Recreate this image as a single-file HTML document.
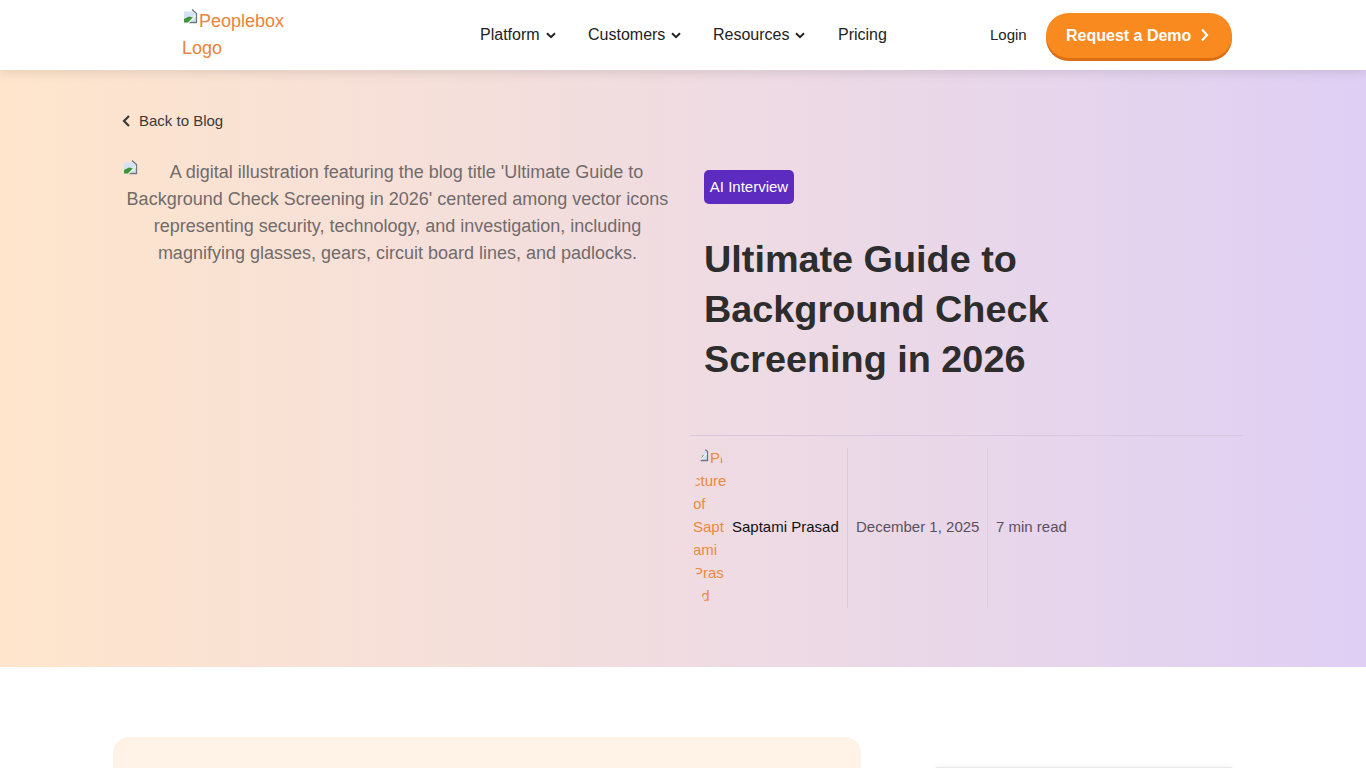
<!DOCTYPE html>
<html>
<head>
<meta charset="utf-8">
<style>
*{box-sizing:border-box;margin:0;padding:0}
html,body{width:1366px;height:768px;overflow:hidden;background:#fff;font-family:"Liberation Sans",sans-serif;}
.hdr{position:absolute;left:0;top:0;width:1366px;height:70px;background:#fff;z-index:5;box-shadow:0 3px 10px rgba(0,0,0,0.1);}
.logo{position:absolute;left:182px;top:8px;width:120px;font-size:18px;line-height:27px;color:#e9843a;}
.logo .bi{display:inline-block;width:16px;height:16px;vertical-align:top;margin-top:0px;margin-right:1px}
.nav{position:absolute;top:25px;font-size:16px;color:#222;line-height:20px;}
.chev{display:inline-block;vertical-align:1px;margin-left:6px}
.login{position:absolute;left:990px;top:26px;font-size:15px;color:#222;}
.btn{position:absolute;left:1046px;top:13px;width:186px;height:45px;border-radius:23px;background:#f98a1f;box-shadow:0 3px 0 #dc6f14;color:#fff;font-weight:bold;font-size:16px;line-height:46px;padding-left:20px;}
.hero{position:absolute;left:0;top:70px;width:1366px;height:597px;background:linear-gradient(90deg,#ffe5cc 0%,#f3dedd 40%,#e9d7e9 70%,#dfcff4 100%);}
.back{position:absolute;left:122px;top:112px;font-size:15px;color:#3d3936;line-height:18px;}
.alt{position:absolute;left:122px;top:159px;width:551px;font-size:18px;line-height:27px;color:#716b6b;text-align:center;}
.tag{position:absolute;left:704px;top:170px;width:90px;height:34px;border-radius:5px;background:#5d2bc0;color:#fff;font-size:15px;line-height:34px;text-align:center;}
.title{position:absolute;left:704px;top:234px;width:500px;font-size:37.8px;line-height:50px;font-weight:bold;color:#2d2d2d;}
.sep{position:absolute;left:690px;top:435px;width:553px;height:1px;background:#d9c7e0;}
.vl{position:absolute;top:448px;width:1px;height:160px;background:#dac8e2;}
.aalt{position:absolute;left:693px;top:445px;width:37px;height:162px;border-radius:50%;padding-top:1px;font-size:15px;line-height:23px;color:#ec8a3c;overflow:hidden;overflow-wrap:anywhere;}
.meta{position:absolute;top:518px;font-size:15px;line-height:18px;}
.card1{position:absolute;left:113px;top:737px;width:748px;height:100px;border-radius:16px;background:#fff2e6;}
.card2{position:absolute;left:936px;top:767px;width:296px;height:100px;background:#fff;border-top:1px solid #ebebeb;box-shadow:0 -1px 4px rgba(0,0,0,0.05);}
</style>
</head>
<body>
<div class="hdr">
  <div class="logo"><svg class="bi" viewBox="0 0 16 16"><path d="M2 3.5H10.5L14.5 7V14.5H2Z" fill="#d3e2f4"/><path d="M10 1.5L14.5 5.5V14.5H7" fill="none" stroke="#6f7780" stroke-width="1.3"/><path d="M2 14.5V11L7 8.5L11 9.5L6.5 14.5Z" fill="#3c9236"/><path d="M6.5 14.8L13.8 7.5" stroke="#e9f7e0" stroke-width="1.3"/></svg>Peoplebox Logo</div>
  <div class="nav" style="left:480px">Platform<svg class="chev" width="10" height="7" viewBox="0 0 10 7"><path d="M1 1.2l4 4 4-4" fill="none" stroke="#222" stroke-width="2"/></svg></div>
  <div class="nav" style="left:588px">Customers<svg class="chev" width="10" height="7" viewBox="0 0 10 7"><path d="M1 1.2l4 4 4-4" fill="none" stroke="#222" stroke-width="2"/></svg></div>
  <div class="nav" style="left:713px">Resources<svg class="chev" width="10" height="7" viewBox="0 0 10 7"><path d="M1 1.2l4 4 4-4" fill="none" stroke="#222" stroke-width="2"/></svg></div>
  <div class="nav" style="left:838px">Pricing</div>
  <div class="login">Login</div>
  <div class="btn">Request a Demo <svg style="vertical-align:-1px;margin-left:4px" width="9" height="14" viewBox="0 0 9 14"><path d="M2 1.5l5 5.5-5 5.5" fill="none" stroke="#fff" stroke-width="2.2"/></svg></div>
</div>
<div class="hero"></div>
<div class="back"><svg style="vertical-align:-2px;margin-right:8px" width="9" height="14" viewBox="0 0 9 14"><path d="M7 2l-5 5 5 5" fill="none" stroke="#3d3936" stroke-width="2.2"/></svg>Back to Blog</div>
<div class="alt"><svg style="float:left;margin:0 2px 0 0" width="16" height="16" viewBox="0 0 16 16"><path d="M2 3.5H10.5L14.5 7V14.5H2Z" fill="#d3e2f4"/><path d="M10 1.5L14.5 5.5V14.5H7" fill="none" stroke="#6f7780" stroke-width="1.3"/><path d="M2 14.5V11L7 8.5L11 9.5L6.5 14.5Z" fill="#3c9236"/><path d="M6.5 14.8L13.8 7.5" stroke="#e9f7e0" stroke-width="1.3"/></svg>A digital illustration featuring the blog title 'Ultimate Guide to Background Check Screening in 2026' centered among vector icons representing security, technology, and investigation, including magnifying glasses, gears, circuit board lines, and padlocks.</div>
<div class="tag">AI Interview</div>
<div class="title">Ultimate Guide to Background Check Screening in 2026</div>
<div class="sep"></div>
<div class="vl" style="left:847px"></div>
<div class="vl" style="left:987px"></div>
<div class="aalt"><svg style="float:left;margin-right:1px" width="16" height="16" viewBox="0 0 16 16"><path d="M2 3.5H10.5L14.5 7V14.5H2Z" fill="#d3e2f4"/><path d="M10 1.5L14.5 5.5V14.5H7" fill="none" stroke="#6f7780" stroke-width="1.3"/><path d="M2 14.5V11L7 8.5L11 9.5L6.5 14.5Z" fill="#3c9236"/><path d="M6.5 14.8L13.8 7.5" stroke="#e9f7e0" stroke-width="1.3"/></svg>Picture of Saptami Prasad</div>
<div class="meta" style="left:732px;color:#111">Saptami Prasad</div>
<div class="meta" style="left:856px;color:#58525e">December 1, 2025</div>
<div class="meta" style="left:996px;color:#58525e">7 min read</div>
<div class="card1"></div>
<div class="card2"></div>
</body>
</html>
